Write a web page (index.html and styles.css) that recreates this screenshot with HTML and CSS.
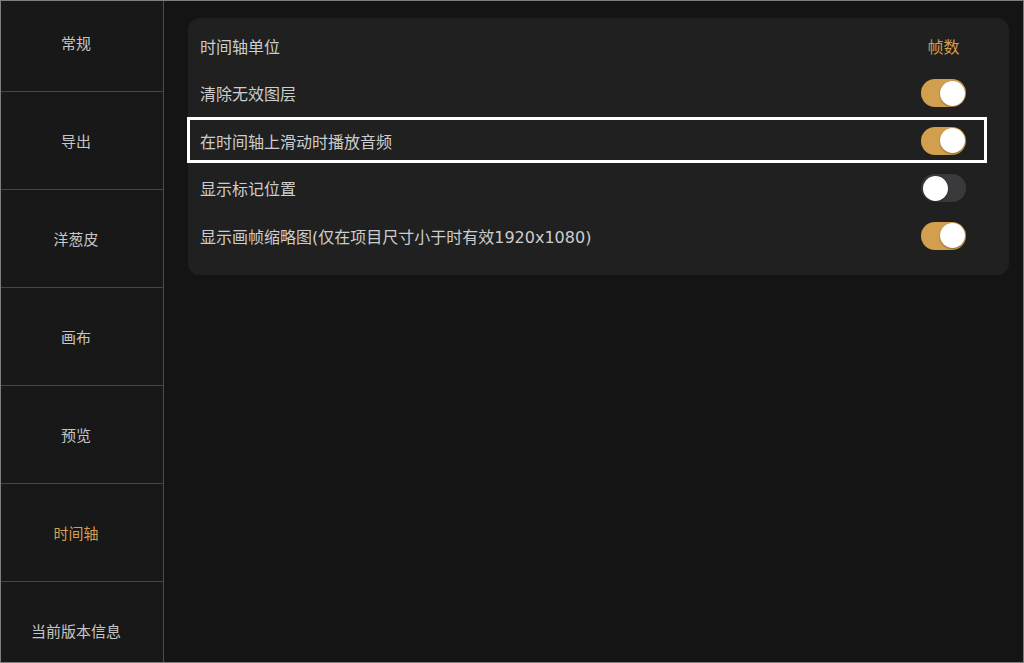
FILE: index.html
```html
<!DOCTYPE html>
<html lang="zh-CN">
<head>
<meta charset="utf-8">
<title>设置</title>
<link rel="stylesheet" href="styles.css">
</head>
<body>
<div class="app">
  <nav class="sidebar">
    <div class="nav-item">常规</div>
    <div class="nav-item">导出</div>
    <div class="nav-item">洋葱皮</div>
    <div class="nav-item">画布</div>
    <div class="nav-item">预览</div>
    <div class="nav-item active">时间轴</div>
    <div class="nav-item">当前版本信息</div>
  </nav>
  <main class="content">
    <section class="card">
      <div class="row">
        <span class="label">时间轴单位</span>
        <span class="value">帧数</span>
      </div>
      <div class="row">
        <span class="label">清除无效图层</span>
        <span class="toggle on"><span class="knob"></span></span>
      </div>
      <div class="row">
        <span class="label">在时间轴上滑动时播放音频</span>
        <span class="toggle on"><span class="knob"></span></span>
      </div>
      <div class="row">
        <span class="label">显示标记位置</span>
        <span class="toggle"><span class="knob"></span></span>
      </div>
      <div class="row">
        <span class="label">显示画帧缩略图(仅在项目尺寸小于时有效1920x1080)</span>
        <span class="toggle on"><span class="knob"></span></span>
      </div>
      <div class="highlight"></div>
    </section>
  </main>
</div>
</body>
</html>
```

FILE: styles.css
```css
html, body {
  margin: 0;
  padding: 0;
  background: #141414;
}
body {
  width: 1024px;
  height: 663px;
  overflow: hidden;
  font-family: "Noto Sans", "Noto Sans CJK SC", sans-serif;
}
.app {
  box-sizing: border-box;
  width: 1024px;
  height: 663px;
  border: 1px solid #7e7e7e;
  display: flex;
  overflow: hidden;
  background: #141414;
}
.sidebar {
  flex: none;
  width: 163px;
  box-sizing: border-box;
  background: #181818;
  border-right: 1px solid #4c4c4c;
  display: flex;
  flex-direction: column;
  margin-top: -7px;
  padding-right: 12px;
}
.nav-item {
  flex: none;
  height: 97px;
  border-bottom: 1px solid #454545;
  margin-right: -12px;
  padding-right: 12px;
  box-sizing: content-box;
  display: flex;
  align-items: center;
  justify-content: center;
  font-size: 15px;
  color: #c6c6c6;
}
.nav-item.active {
  color: #d29f4e;
}
.content {
  flex: 1;
  padding: 17px 14px 0 24px;
}
.card {
  position: relative;
  background: #202020;
  border-radius: 12px;
  padding: 4px 43px 15px 12px;
}
.row {
  height: 47.5px;
  display: flex;
  align-items: center;
  justify-content: space-between;
}
.label {
  font-family: "DejaVu Sans", "Noto Sans CJK SC", sans-serif;
  font-size: 16px;
  color: #cdcdcd;
  white-space: nowrap;
}
.value {
  width: 45px;
  text-align: center;
  font-size: 16px;
  color: #d29f4e;
}
.toggle {
  position: relative;
  width: 45px;
  height: 28px;
  border-radius: 14px;
  background: #3a3a3c;
  flex: none;
}
.toggle.on {
  background: #d29f4e;
}
.knob {
  position: absolute;
  top: 1.5px;
  left: 1.5px;
  width: 25px;
  height: 25px;
  border-radius: 50%;
  background: #ffffff;
  box-shadow: 0 1px 2px rgba(0, 0, 0, 0.35);
}
.toggle.on .knob {
  left: 18.5px;
}
.highlight {
  position: absolute;
  left: -1px;
  top: 99px;
  width: 800px;
  height: 46px;
  border: 3px solid #ffffff;
  box-sizing: border-box;
  pointer-events: none;
}
```
